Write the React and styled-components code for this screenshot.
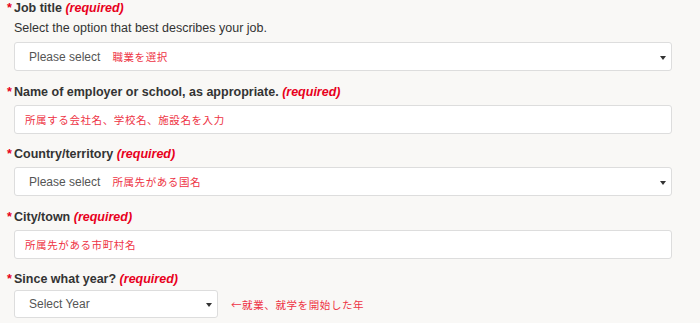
import styled, { createGlobalStyle } from "styled-components";

const GlobalStyle = createGlobalStyle`
  html, body {
    margin: 0;
    background-color: #f9f8f6;
  }
  body {
    font-family: "Liberation Sans", Arial, sans-serif;
    color: #333;
  }
`;

const Form = styled.form`
  display: flex;
  flex-direction: column;
  padding: 0 14px 0 7px;
  width: 686px;
  box-sizing: border-box;
`;

const Field = styled.div`
  display: flex;
  flex-direction: column;
  margin-top: ${(props) => (props.first ? "0" : "12.5px")};
`;

const Label = styled.label`
  display: block;
  font-size: 12.5px;
  font-weight: 700;
  line-height: 17px;
  color: #333;
  margin-bottom: ${(props) => (props.tight ? "2px" : "4px")};
`;

const Star = styled.span`
  color: #e8001c;
  display: inline-block;
  width: 7px;
`;

const Required = styled.em`
  color: #e8001c;
  font-style: italic;
  font-weight: 700;
`;

const Help = styled.p`
  margin: -1px 0 5px 7px;
  font-size: 12.5px;
  line-height: 17px;
  color: #333;
`;

const Control = styled.div`
  display: flex;
  align-items: center;
  gap: 13px;
  margin-left: 7px;
`;

const SelectBox = styled.div`
  position: relative;
  display: flex;
  align-items: center;
  gap: 12px;
  box-sizing: border-box;
  width: ${(props) => props.width || "100%"};
  height: ${(props) => props.height || "29px"};
  padding: 0 24px 0 14px;
  background-color: #fff;
  border: 1px solid #ddd;
  border-radius: 3px;
  font-size: 12px;
  color: #555;
`;

const Caret = styled.span`
  position: absolute;
  right: 5px;
  top: 50%;
  margin-top: -1px;
  width: 0;
  height: 0;
  border-left: 3px solid transparent;
  border-right: 3px solid transparent;
  border-top: 4px solid #333;
`;

const Note = styled.span`
  font-family: "Noto Sans CJK JP", sans-serif;
  font-size: 10.5px;
  letter-spacing: 0.6px;
  color: #ee3344;
  white-space: nowrap;
`;

const TextInput = styled.input`
  box-sizing: border-box;
  width: 100%;
  height: 29px;
  padding: 0 10px;
  background-color: #fff;
  border: 1px solid #ddd;
  border-radius: 3px;
  font-family: "Noto Sans CJK JP", sans-serif;
  font-size: 10.5px;
  letter-spacing: 0.6px;
  outline: none;

  &::placeholder {
    color: #ee3344;
    opacity: 1;
  }
`;

function FieldLabel({ children, tight }) {
  return (
    <Label tight={tight}>
      <Star>*</Star>
      {children} <Required>(required)</Required>
    </Label>
  );
}

function App() {
  return (
    <>
      <GlobalStyle />
      <Form>
        <Field first>
          <FieldLabel>Job title</FieldLabel>
          <Help>Select the option that best describes your job.</Help>
          <Control>
            <SelectBox>
              Please select
              <Note>職業を選択</Note>
              <Caret />
            </SelectBox>
          </Control>
        </Field>

        <Field>
          <FieldLabel>Name of employer or school, as appropriate.</FieldLabel>
          <Control>
            <TextInput placeholder="所属する会社名、学校名、施設名を入力" />
          </Control>
        </Field>

        <Field>
          <FieldLabel>Country/territory</FieldLabel>
          <Control>
            <SelectBox>
              Please select
              <Note>所属先がある国名</Note>
              <Caret />
            </SelectBox>
          </Control>
        </Field>

        <Field>
          <FieldLabel>City/town</FieldLabel>
          <Control>
            <TextInput placeholder="所属先がある市町村名" />
          </Control>
        </Field>

        <Field>
          <FieldLabel tight>Since what year?</FieldLabel>
          <Control>
            <SelectBox width="204px" height="28px">
              Select Year
              <Caret />
            </SelectBox>
            <Note>←就業、就学を開始した年</Note>
          </Control>
        </Field>
      </Form>
    </>
  );
}

export default App;
